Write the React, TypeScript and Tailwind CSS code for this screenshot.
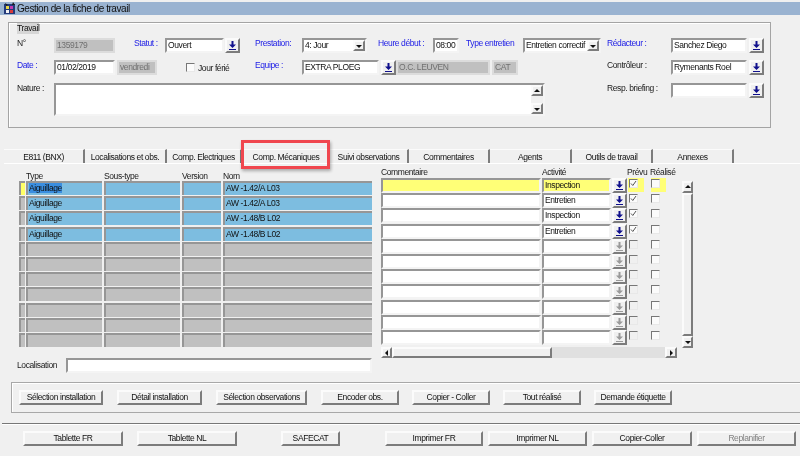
const sunken =
  'border-2 border-t-[#969696] border-l-[#969696] border-r-[#f4f4f4] border-b-[#f4f4f4]';
const raised =
  'border-2 border-t-[#fbfbfb] border-l-[#fbfbfb] border-r-[#7c7c7c] border-b-[#7c7c7c]';

function Label({ text, w, blue, className = '' }: { text: string; w: string; blue?: boolean; className?: string }) {
  return (
    <div className={`${w} ${className} shrink-0 whitespace-nowrap text-[8.5px] leading-[11px] ${blue ? 'text-[#2020e6]' : 'text-[#1a1a1a]'}`}>
      {text}
    </div>
  );
}

function Field({ value = '', w, off, className = '' }: { value?: string; w: string; off?: boolean; className?: string }) {
  return (
    <div
      className={`${w} ${className} ${off ? 'border-[#dcdcdc] bg-[#c0c0c0] text-[#707070]' : 'bg-white text-[#111] ' + sunken} h-[15px] shrink-0 overflow-hidden whitespace-nowrap border-2 pl-[1px] text-[8.5px] leading-[11px]`}
    >
      {value}
    </div>
  );
}

function DownBtn({ className = '', off, h = 'h-[15px]' }: { className?: string; off?: boolean; h?: string }) {
  const c = off ? '#9a9a9a' : '#10108c';
  return (
    <div className={`${className} ${raised} ${h} flex w-[15px] shrink-0 items-center justify-center bg-[#f0f0f0]`}>
      <svg width="7" height="9" viewBox="0 0 7 9">
        <path d="M2.5 0h2v3.5H7L3.5 7 0 3.5h2.5z" fill={c} />
        <path d="M0 8h7v1H0z" fill={c} />
      </svg>
    </div>
  );
}

function Arrow({ dir, className = '' }: { dir: 'up' | 'down' | 'left' | 'right'; className?: string }) {
  const d = { up: 'M0 4l3-3 3 3z', down: 'M0 2l3 3 3-3z', left: 'M4 0L1 3l3 3z', right: 'M2 0l3 3-3 3z' }[dir];
  return (
    <div className={`${className} ${raised} flex shrink-0 items-center justify-center bg-[#f0f0f0]`}>
      <svg width="6" height="6" viewBox="0 0 6 6">
        <path d={d} fill="#111" />
      </svg>
    </div>
  );
}

function Select({ value, w, className = '' }: { value: string; w: string; className?: string }) {
  return (
    <div className={`${w} ${className} ${sunken} flex h-[15px] shrink-0 items-center justify-between bg-white pl-[1px] text-[8.5px] leading-[11px] text-[#111]`}>
      <span className="whitespace-nowrap">{value}</span>
      <Arrow dir="down" className="h-[11px] w-[12px]" />
    </div>
  );
}

function Check({ on, off, className = '' }: { on?: boolean; off?: boolean; className?: string }) {
  return (
    <div className={`${className} h-[9px] w-[9px] shrink-0 border border-t-[#777] border-l-[#777] border-r-[#e8e8e8] border-b-[#e8e8e8] ${off ? 'bg-[#f0f0f0]' : 'bg-[#fbfbfb]'}`}>
      {on && (
        <svg width="7" height="7" viewBox="0 0 7 7" className="block">
          <path d="M1 3.5l1.8 2L6 1" fill="none" stroke="#555" strokeWidth="1" />
        </svg>
      )}
    </div>
  );
}

function Btn({ text, w, off, className = '' }: { text: string; w: string; off?: boolean; className?: string }) {
  return (
    <div className={`${w} ${className} ${raised} flex h-[15px] shrink-0 items-center justify-center whitespace-nowrap bg-[#f0f0f0] text-[8.5px] leading-[11px] ${off ? 'text-[#808080]' : 'text-[#111]'}`}>
      {text}
    </div>
  );
}

const tabs = [
  { t: 'E811 (BNX)', w: 'w-[81px]' },
  { t: 'Localisations et obs.', w: 'w-[82px]' },
  { t: 'Comp. Electriques', w: 'w-[75px]' },
  { t: 'Comp. Mécaniques', w: 'w-[88px]', active: true },
  { t: 'Suivi observations', w: 'w-[79px]' },
  { t: 'Commentaires', w: 'w-[81px]' },
  { t: 'Agents', w: 'w-[82px]' },
  { t: 'Outils de travail', w: 'w-[81px]' },
  { t: 'Annexes', w: 'w-[81px]' },
];

const parts = [
  { type: 'Aiguillage', nom: 'AW -1.42/A L03', act: 'Inspection' },
  { type: 'Aiguillage', nom: 'AW -1.42/A L03', act: 'Entretien' },
  { type: 'Aiguillage', nom: 'AW -1.48/B L02', act: 'Inspection' },
  { type: 'Aiguillage', nom: 'AW -1.48/B L02', act: 'Entretien' },
  ...Array.from({ length: 7 }, () => ({ type: '', nom: '', act: '' })),
];

function Cell({ w, filled, children, className = '' }: { w: string; filled: boolean; children?: React.ReactNode; className?: string }) {
  return (
    <div
      className={`${w} ${className} ${filled ? 'bg-[#7dbde0]' : 'bg-[#c0c0c0]'} h-[14px] shrink-0 overflow-hidden whitespace-nowrap border-t-2 border-l-2 border-t-[#969696] border-l-[#969696] pl-[1px] text-[8.5px] leading-[11px] text-[#111]`}
    >
      {children}
    </div>
  );
}

export default function App() {
  return (
    <div className="relative flex h-[456px] w-[800px] flex-col overflow-hidden bg-[#f0f0f0] font-['Liberation_Sans',Arial,sans-serif] tracking-[-0.4px] blur-[0.3px]">
      {/* title bar */}
      <div className="mt-[2px] flex h-[13px] shrink-0 items-center bg-[#9ab3d1] pl-[3px] text-[10px] tracking-[-0.45px] text-[#111]">
        <svg width="13" height="13" viewBox="0 0 13 13" className="shrink-0">
          <path d="M1 2h11v10H1z" fill="#233a7a" />
          <path d="M2 1l3 2-2 1zM10 0l2 3-3 0z" fill="#1c1c1c" />
          <path d="M3 4h3v3H3z" fill="#e9d84a" />
          <path d="M7 4h3v3H7z" fill="#c23bb0" />
          <path d="M3 8h3v3H3z" fill="#f3f3f3" />
          <path d="M7 8h3v3H7z" fill="#d83b3b" />
        </svg>
        <span className="ml-[1px] whitespace-nowrap">Gestion de la fiche de travail</span>
      </div>

      {/* Travail */}
      <div className="ml-[8px] mt-[7px] h-[106px] w-[763px] shrink-0 border border-[#a4a4a4] pl-[8px] shadow-[inset_1px_1px_0_#fff]">
        <div className="w-fit bg-[#d6d6d6] text-[8.5px] leading-[11px] text-[#111]">Travail</div>
        <div className="mt-[4px] flex items-start">
          <Label text="N°" w="w-[37px]" />
          <Field value="1359179" w="w-[61px]" off />
          <Label text="Statut :" w="w-[31px]" className="ml-[19px]" blue />
          <Field value="Ouvert" w="w-[59px]" />
          <DownBtn className="ml-[1px]" />
          <Label text="Prestation:" w="w-[47px]" className="ml-[15px]" blue />
          <Select value="4: Jour" w="w-[65px]" />
          <Label text="Heure début :" w="w-[55px]" className="ml-[11px]" blue />
          <Field value="08:00" w="w-[26px]" />
          <Label text="Type entretien" w="w-[57px]" className="ml-[7px]" blue />
          <Select value="Entretien correctif" w="w-[78px]" />
          <Label text="Rédacteur :" w="w-[64px]" className="ml-[6px]" blue />
          <Field value="Sanchez Diego" w="w-[76px]" />
          <DownBtn className="ml-[2px]" />
        </div>
        <div className="mt-[7px] flex items-start">
          <Label text="Date :" w="w-[37px]" blue />
          <Field value="01/02/2019" w="w-[61px]" />
          <Field value="vendredi" w="w-[40px]" className="ml-[2px]" off />
          <Check className="ml-[29px] mt-[3px]" />
          <Label text="Jour férié" w="w-[57px]" className="ml-[3px] mt-[3px]" />
          <Label text="Equipe :" w="w-[47px]" blue />
          <Field value="EXTRA PLOEG" w="w-[77px]" />
          <DownBtn className="ml-[2px]" />
          <Field value="O.C. LEUVEN" w="w-[94px]" off />
          <Field value="CAT" w="w-[26px]" className="ml-[2px]" off />
          <Label text="Contrôleur :" w="w-[64px]" className="ml-[89px]" />
          <Field value="Rymenants Roel" w="w-[76px]" />
          <DownBtn className="ml-[2px]" />
        </div>
        <div className="mt-[8px] flex items-start">
          <Label text="Nature :" w="w-[37px]" />
          <div className={`${sunken} flex h-[33px] w-[491px] shrink-0 justify-end bg-white`}>
            <div className="flex w-[12px] flex-col bg-[#f0f0f0]">
              <Arrow dir="up" className="h-[11px] w-[12px]" />
              <div className="flex-1" />
              <Arrow dir="down" className="h-[11px] w-[12px]" />
            </div>
          </div>
          <Label text="Resp. briefing :" w="w-[64px]" className="ml-[62px]" />
          <Field w="w-[76px]" />
          <DownBtn className="ml-[2px]" />
        </div>
      </div>

      {/* tabs */}
      <div className="ml-[4px] mt-[21px] flex h-[15px] shrink-0 border-b border-b-white">
        {tabs.map((tab) => (
          <div
            key={tab.t}
            className={`${tab.w} flex shrink-0 items-center justify-center whitespace-nowrap border-t border-t-[#fbfbfb] pt-[1px] text-[8.5px] leading-[11px] text-[#111] ${tab.active ? '' : 'border-r-2 border-r-[#7c7c7c]'}`}
          >
            {tab.t}
          </div>
        ))}
      </div>

      {/* tab panel */}
      <div className="flex h-[218px] shrink-0 items-start">
        <div className="ml-[19px] w-[353px] shrink-0 pt-[7px]">
          <div className="flex h-[10px] text-[8.5px] leading-[10px] text-[#1a1a1a]">
            <span className="ml-[7px] w-[78px]">Type</span>
            <span className="w-[78px]">Sous-type</span>
            <span className="w-[41px]">Version</span>
            <span>Nom</span>
          </div>
          {parts.map((p, i) => (
            <div key={i} className="flex h-[15.2px]">
              <div className={`h-[14px] w-[6px] shrink-0 border-t-2 border-l-2 border-t-[#969696] border-l-[#969696] ${i === 0 ? 'bg-[#ffff66]' : 'bg-[#c0c0c0]'}`} />
              <Cell w="w-[76px]" filled={!!p.type} className="ml-[1px]">
                {i === 0 ? <span className="bg-[#3a8ee0]">{p.type}</span> : p.type}
              </Cell>
              <Cell w="w-[76px]" filled={!!p.type} className="ml-[2px]" />
              <Cell w="w-[39px]" filled={!!p.type} className="ml-[2px]" />
              <Cell w="w-[149px]" filled={!!p.type} className="ml-[2px]">
                {p.nom}
              </Cell>
            </div>
          ))}
          <div className="-ml-[2px] mt-[10px] flex items-center">
            <Label text="Localisation" w="w-[49px]" />
            <Field w="w-[306px]" />
          </div>
        </div>

        <div className="ml-[9px] w-[296px] shrink-0 pt-[3px]">
          <div className="flex h-[11px] text-[8.5px] leading-[10px] text-[#1a1a1a]">
            <span className="w-[161px]">Commentaire</span>
            <span className="w-[85px]">Activité</span>
            <span className="w-[23px]">Prévu</span>
            <span>Réalisé</span>
          </div>
          {parts.map((p, i) => {
            const hl = i === 0;
            return (
              <div key={i} className="flex h-[15.2px]">
                <div className={`${sunken} h-[15px] w-[160px] shrink-0 ${hl ? 'bg-[#ffff77]' : 'bg-white'}`} />
                <div className={`${sunken} ml-[1px] h-[15px] w-[69px] shrink-0 overflow-hidden whitespace-nowrap pl-[1px] text-[8.5px] leading-[11px] text-[#111] ${hl ? 'bg-[#ffff77]' : 'bg-white'}`}>
                  {p.act}
                </div>
                <DownBtn className="ml-[1px]" off={!p.act} />
                <div className={`ml-[1px] flex h-[14px] w-[16px] shrink-0 ${hl ? 'bg-[#ffff77]' : ''}`}>
                  <Check on={!!p.act} off={!p.act} className="ml-[1px] mt-[1px]" />
                </div>
                <div className={`ml-[7px] flex h-[14px] w-[15px] shrink-0 ${hl ? 'bg-[#ffff77]' : ''}`}>
                  <Check className="mt-[1px]" />
                </div>
              </div>
            );
          })}
          <div className="mt-[2px] flex h-[11px] w-[296px]">
            <Arrow dir="left" className="h-[11px] w-[11px]" />
            <div className={`${raised} h-[11px] w-[160px] shrink-0 bg-[#f0f0f0]`} />
            <div className="h-[11px] w-[113px] shrink-0 bg-[#e0e0e0]" />
            <Arrow dir="right" className="h-[11px] w-[12px]" />
          </div>
        </div>

        <div className="ml-[5px] mt-[17px] flex h-[167px] w-[11px] shrink-0 flex-col">
          <Arrow dir="up" className="h-[12px] w-[11px]" />
          <div className={`${raised} flex-1 bg-[#f0f0f0]`} />
          <Arrow dir="down" className="h-[12px] w-[11px]" />
        </div>
      </div>

      {/* action group */}
      <div className="ml-[11px] flex h-[31px] shrink-0 items-center border border-r-0 border-[#a8a8a8] pl-[7px] shadow-[inset_1px_1px_0_#fff]">
        <Btn text="Sélection installation" w="w-[84px]" />
        <Btn text="Détail installation" w="w-[85px]" className="ml-[14px]" />
        <Btn text="Sélection observations" w="w-[91px]" className="ml-[14px]" />
        <Btn text="Encoder obs." w="w-[78px]" className="ml-[14px]" />
        <Btn text="Copier - Coller" w="w-[78px]" className="ml-[13px]" />
        <Btn text="Tout réalisé" w="w-[78px]" className="ml-[13px]" />
        <Btn text="Demande étiquette" w="w-[78px]" className="ml-[13px]" />
      </div>

      {/* footer */}
      <div className="ml-[2px] mt-[10px] h-[2px] shrink-0 border-t border-t-[#777] border-b border-b-white" />
      <div className="ml-[23px] mt-[6px] flex">
        <Btn text="Tablette FR" w="w-[100px]" />
        <Btn text="Tablette NL" w="w-[100px]" className="ml-[14px]" />
        <Btn text="SAFECAT" w="w-[59px]" className="ml-[44px]" />
        <Btn text="Imprimer FR" w="w-[98px]" className="ml-[45px]" />
        <Btn text="Imprimer NL" w="w-[99px]" className="ml-[5px]" />
        <Btn text="Copier-Coller" w="w-[100px]" className="ml-[5px]" />
        <Btn text="Replanifier" w="w-[99px]" className="ml-[5px]" off />
      </div>

      {/* red highlight over the active tab */}
      <div className="absolute left-[241px] top-[140px] h-[29px] w-[89px] border-[3px] border-[#f0474f] shadow-[1px_2px_3px_rgba(0,0,0,0.3)]" />
    </div>
  );
}
